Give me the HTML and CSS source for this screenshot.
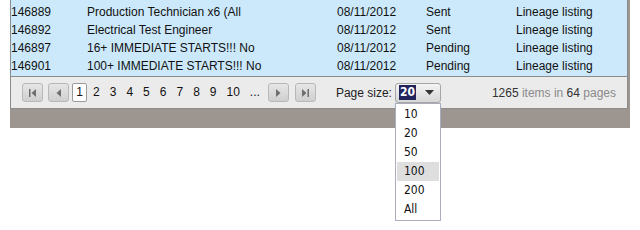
FILE: index.html
```html
<!DOCTYPE html>
<html lang="en">
<head>
  <meta charset="UTF-8" />
  <title>Job listings</title>
  <link rel="stylesheet" href="styles.css">
</head>
<body>

  <div class="shell">
    <div class="grid">
      <div class="grid-rows">
        <div class="row"><span>146889</span><span>Production Technician x6 (All</span><span>08/11/2012</span><span>Sent</span><span>Lineage listing</span></div>
        <div class="row"><span>146892</span><span>Electrical Test Engineer</span><span>08/11/2012</span><span>Sent</span><span>Lineage listing</span></div>
        <div class="row"><span>146897</span><span>16+ IMMEDIATE STARTS!!! No</span><span>08/11/2012</span><span>Pending</span><span>Lineage listing</span></div>
        <div class="row"><span>146901</span><span>100+ IMMEDIATE STARTS!!! No</span><span>08/11/2012</span><span>Pending</span><span>Lineage listing</span></div>
      </div>

      <!-- pager -->
      <div class="pager">
        <a class="pager-btn first-btn" href="#">
          <svg width="10" height="10" viewBox="0 0 10 10"><rect x="1" y="1" width="1.5" height="8" fill="#6f6f6f"/><path d="M8 1 L3.5 5 L8 9 Z" fill="#6f6f6f"/></svg>
        </a>
        <a class="pager-btn prev-btn" href="#">
          <svg width="10" height="10" viewBox="0 0 10 10"><path d="M7 1 L2.5 5 L7 9 Z" fill="#6f6f6f"/></svg>
        </a>
        <div class="pages">
          <span class="page current">1</span>
          <a class="page" href="#">2</a>
          <a class="page" href="#">3</a>
          <a class="page" href="#">4</a>
          <a class="page" href="#">5</a>
          <a class="page" href="#">6</a>
          <a class="page" href="#">7</a>
          <a class="page" href="#">8</a>
          <a class="page" href="#">9</a>
          <a class="page" href="#">10</a>
          <a class="page more" href="#">...</a>
        </div>
        <a class="pager-btn next-btn" href="#">
          <svg width="10" height="10" viewBox="0 0 10 10"><path d="M3 1 L7.5 5 L3 9 Z" fill="#6f6f6f"/></svg>
        </a>
        <a class="pager-btn last-btn" href="#">
          <svg width="10" height="10" viewBox="0 0 10 10"><path d="M2 1 L6.5 5 L2 9 Z" fill="#6f6f6f"/><rect x="7.5" y="1" width="1.5" height="8" fill="#6f6f6f"/></svg>
        </a>

        <span class="size-label">Page size:</span>
        <div class="size-select">
          <span class="size-value">20</span>
          <svg class="size-arrow" width="9" height="5" viewBox="0 0 9 5"><path d="M0 0 L9 0 L4.5 5 Z" fill="#333"/></svg>
          <ul class="size-list">
            <li>10</li>
            <li>20</li>
            <li>50</li>
            <li class="hover">100</li>
            <li>200</li>
            <li>All</li>
          </ul>
        </div>

        <span class="pager-info"><b>1265</b> items in <b>64</b> pages</span>
      </div>
    </div>
  </div>

</body>
</html>
```

FILE: styles.css
```css
* {
  box-sizing: border-box;
}

html,
body {
  min-height: 100%;
  height: 100%;
}

body {
  margin: 0;
  background: #fff;
  font-family: 'Liberation Sans', Arial, sans-serif;
  font-size: 12px;
  color: #111;
}

.shell {
  margin-left: 10px;
  width: 620px;
  height: 128px;
  background: #9d958f;
}

.grid {
  position: relative;
  z-index: 1;
  width: 618px;
  border-left: 1px solid #8c8c8c;
  border-right: 1px solid #8c8c8c;
  border-bottom: 1px solid #8c8c8c;
}

.grid-rows {
  background: #cce9fb;
  padding-top: 3px;
  height: 76px;
}

.row {
  display: grid;
  grid-template-columns: 76px 250px 89px 90px 1fr;
  height: 18px;
  line-height: 18px;
  white-space: nowrap;
  overflow: hidden;
}

/* Pager */
.pager {
  display: flex;
  align-items: center;
  height: 32px;
  padding: 0 11px 0 11px;
  background: #ebebeb;
  border-top: 1px solid #8c8c8c;
}

.pager-btn {
  display: flex;
  align-items: center;
  justify-content: center;
  width: 21px;
  height: 19px;
  border: 1px solid #b8b8b8;
  border-radius: 3px;
  background: linear-gradient(#e6e6e6, #cfcfcf);
}

.prev-btn {
  margin-left: 5px;
}

.next-btn {
  margin-left: 3px;
}

.last-btn {
  margin-left: 6px;
}

.pages {
  display: flex;
  align-items: center;
  margin-left: 3px;
}

.page {
  display: block;
  height: 19px;
  line-height: 17px;
  padding: 0 4px;
  border: 1px solid transparent;
  color: #111;
  text-decoration: none;
}

.page.current {
  width: 15px;
  padding: 0;
  margin-right: 1px;
  text-align: center;
  background: #fff;
  border-color: #9a9a9a;
  border-radius: 2px;
}

.size-label {
  margin-left: 20px;
  color: #222;
}

.size-select {
  position: relative;
  display: flex;
  align-items: center;
  margin-left: 3px;
  width: 46px;
  height: 20px;
  padding-left: 3px;
  border: 1px solid #a6a6a6;
  border-radius: 3px;
  background: linear-gradient(#f4f4f4, #d6d6d6);
}

.size-value {
  background: #23235c;
  color: #fff;
  font-family: 'DejaVu Sans Condensed', 'DejaVu Sans', sans-serif;
  font-weight: bold;
  font-size: 12px;
  line-height: 15px;
  padding: 0 1px;
}

.size-arrow {
  margin-left: auto;
  margin-right: 6px;
}

.size-list {
  position: absolute;
  z-index: 5;
  left: -1px;
  top: 19px;
  width: 46px;
  margin: 0;
  padding: 1px 1px;
  list-style: none;
  background: #fff;
  border: 1px solid #a9adbd;
  font-family: 'DejaVu Sans Condensed', 'DejaVu Sans', sans-serif;
  font-size: 12px;
  color: #111;
}

.size-list li {
  height: 19px;
  line-height: 19px;
  padding-left: 7px;
}

.size-list li.hover {
  background: #dedede;
}

.pager-info {
  margin-left: auto;
  color: #8a8a8a;
}

.pager-info b {
  font-weight: normal;
  color: #333;
}
```
